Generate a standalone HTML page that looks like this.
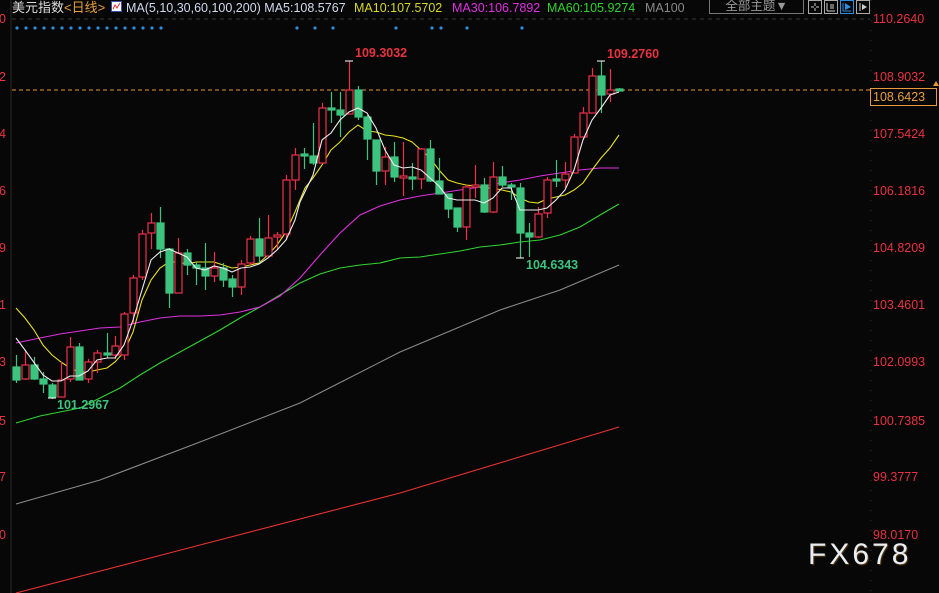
<!DOCTYPE html>
<html><head><meta charset="utf-8"><style>
body{margin:0;background:#070707;width:939px;height:593px;overflow:hidden;position:relative;font-family:"Liberation Sans","Noto Sans CJK SC",sans-serif}
.h{position:absolute;top:1px;font-size:12.5px;white-space:nowrap;line-height:14px}
.ax{position:absolute;left:873px;font-size:12.5px;color:#e8333f}
.lx{position:absolute;left:-1px;font-size:12.5px;color:#e8333f}
</style></head><body>
<svg width="939" height="593" style="position:absolute;left:0;top:0">
<line x1="11" y1="0" x2="11" y2="593" stroke="#2a2a2a"/>
<line x1="871" y1="0" x2="871" y2="593" stroke="#333" stroke-dasharray="1,9"/>
<line x1="12" y1="19" x2="870" y2="19" stroke="#3a3a3a" stroke-dasharray="4,4"/>
<line x1="12" y1="90" x2="870" y2="90" stroke="#e89a3a" stroke-dasharray="4,3"/>
<g fill="#2b8fdc">
<circle cx="17" cy="28" r="1.6"/><circle cx="26" cy="28" r="1.6"/><circle cx="35" cy="28" r="1.6"/><circle cx="44" cy="28" r="1.6"/><circle cx="53" cy="28" r="1.6"/><circle cx="62" cy="28" r="1.6"/><circle cx="71" cy="28" r="1.6"/><circle cx="80" cy="28" r="1.6"/><circle cx="89" cy="28" r="1.6"/><circle cx="98" cy="28" r="1.6"/><circle cx="107" cy="28" r="1.6"/><circle cx="116" cy="28" r="1.6"/><circle cx="125" cy="28" r="1.6"/><circle cx="134" cy="28" r="1.6"/><circle cx="143" cy="28" r="1.6"/><circle cx="152" cy="28" r="1.6"/><circle cx="161" cy="28" r="1.6"/>
<circle cx="297" cy="28" r="1.6"/><circle cx="315" cy="28" r="1.6"/><circle cx="333" cy="28" r="1.6"/><circle cx="396" cy="28" r="1.6"/><circle cx="432" cy="28" r="1.6"/><circle cx="441" cy="28" r="1.6"/><circle cx="467" cy="28" r="1.6"/><circle cx="522" cy="28" r="1.6"/>
</g>
<g fill="none" stroke-width="1.1">
<polyline stroke="#e8332f" points="16,593 200,545 400,493 619,427"/>
<polyline stroke="#8a8a8a" points="16,504 100,480 200,442 300,403 400,352 500,310 560,290 619,265"/>
<polyline stroke="#2fd42f" points="16,423 40,416 60,412 80,408 100,398 120,388 140,375 160,363 180,352 200,341 220,330 240,318 260,307 280,295 300,283 320,274 340,268 360,265 380,263 400,258 420,257 440,254 460,251 480,247 500,245 520,242 540,240 560,235 580,227 600,215 619,204"/>
<polyline stroke="#e030e0" points="16,343 40,338 60,334 80,331 100,328 120,327 140,322 160,318 180,316 200,316 220,315 240,312 260,307 280,296 300,278 320,255 340,233 360,215 380,206 400,200 420,196 440,193 460,190 480,187 500,183 520,180 540,176 560,173 580,170 600,168 619,168"/>
<polyline stroke="#e8e020" points="16,308 25,318 34,330 43,345 52,355 61,362 70,368 79,372 88,372 97,370 107,368 115,362 124,352 133,332 142,300 151,280 160,268 169,262 178,262 187,264 196,262 205,262 214,262 223,265 232,268 241,267 250,265 259,263 268,255 277,245 286,232 295,212 305,188 313,178 322,165 331,150 340,142 349,132 358,125 367,131 376,132 385,135 394,136 403,138 412,142 421,150 430,158 439,170 448,180 457,183 466,185 475,186 484,188 493,188 502,190 511,192 520,198 529,202 538,203 547,199 556,197 565,195 574,190 583,183 592,170 601,158 610,148 619,135"/>
</g>
<g id="c" stroke-width="1.2"></g>
<polyline fill="none" stroke="#eeeeee" stroke-width="1.1" points="16,338 25,350 43,375 52,381 61,381 70,376 79,376 88,371 97,360 107,358 115,358 124,345 133,320 142,290 151,260 160,252 169,249 178,253 187,257 196,268 205,270 214,266 223,268 232,272 241,268 250,267 259,264 268,258 277,250 286,240 295,220 300,202 313,175 322,140 331,133 340,120 349,112 358,108 367,113 376,128 385,150 394,165 403,168 412,167 421,170 430,178 439,186 448,198 457,200 466,200 475,200 484,203 493,198 502,188 511,188 520,210 529,210 538,210 547,208 556,200 565,190 574,170 583,140 592,120 601,108 610,95 619,92"/>
<g stroke="#fff" stroke-width="1"><line x1="345" y1="61" x2="353" y2="61"/><line x1="597" y1="61" x2="605" y2="61"/><line x1="516" y1="258" x2="524" y2="258"/><line x1="48" y1="398" x2="56" y2="398"/></g>
<polygon points="933,86 939,86 936,81" fill="#e89a3a"/>
<rect x="111.5" y="1.5" width="10" height="10" fill="#fff" stroke="#3355aa"/>
<polyline points="113,9 115,5 117,8 120,3" fill="none" stroke="#e03030" stroke-width="1"/>
<rect x="808.5" y="0.5" width="13" height="13" fill="none" stroke="#aaa"/>
<g stroke="#ccc"><line x1="815" y1="3" x2="815" y2="6"/><line x1="815" y1="8" x2="815" y2="11"/><line x1="811" y1="7" x2="814" y2="7"/><line x1="816" y1="7" x2="819" y2="7"/></g>
<rect x="824.5" y="0.5" width="13" height="13" fill="none" stroke="#aaa"/>
<g stroke="#ccc"><line x1="827" y1="3" x2="827" y2="11"/><line x1="827" y1="11" x2="835" y2="11"/><line x1="831" y1="4" x2="831" y2="9"/><line x1="833" y1="4" x2="833" y2="9"/></g>
<rect x="840.5" y="0.5" width="13" height="13" fill="none" stroke="#2b8fdc"/>
<g stroke="#2b8fdc"><line x1="843" y1="3" x2="843" y2="11"/><line x1="843" y1="11" x2="851" y2="11"/></g><polygon points="845,3 851,7 845,10" fill="#2b8fdc"/>
<rect x="856.5" y="0.5" width="13" height="13" fill="none" stroke="#aaa"/>
<line x1="860" y1="3" x2="860" y2="11" stroke="#ccc"/><polygon points="862,4 867,7 862,10" fill="#ccc"/>
</svg>
<div class="h" style="left:12px;color:#ddd;font-size:13px">美元指数<span style="color:#e8a040">&lt;日线&gt;</span></div>
<div class="h" style="left:126px;color:#cfd8ee">MA(5,10,30,60,100,200) MA5:108.5767</div>
<div class="h" style="left:354px;color:#d8d820">MA10:107.5702</div>
<div class="h" style="left:452px;color:#e030e0">MA30:106.7892</div>
<div class="h" style="left:547px;color:#2fd42f">MA60:105.9274</div>
<div class="h" style="left:645px;color:#888">MA100</div>
<div style="position:absolute;left:709px;top:0;width:93px;height:13px;border:1px solid #777;border-top:none;color:#999;font-size:12.5px;text-align:center;line-height:13px">全部主题▼</div>
<div class="ax" style="top:12px">110.2640</div><div class="ax" style="top:70px">108.9032</div>
<div style="position:absolute;left:870px;top:88px;width:63px;height:16px;border:1px solid #e89a3a;color:#e8a040;font-size:12.5px;line-height:16px;padding-left:2px">108.6423</div>
<div class="ax" style="top:127px">107.5424</div><div class="ax" style="top:184px">106.1816</div><div class="ax" style="top:241px">104.8209</div><div class="ax" style="top:298px">103.4601</div><div class="ax" style="top:355px">102.0993</div><div class="ax" style="top:414px">100.7385</div><div class="ax" style="top:470px">99.3777</div><div class="ax" style="top:528px">98.0170</div>
<div class="lx" style="top:12px">0</div><div class="lx" style="top:70px">2</div><div class="lx" style="top:127px">4</div><div class="lx" style="top:184px">6</div><div class="lx" style="top:241px">9</div><div class="lx" style="top:298px">1</div><div class="lx" style="top:355px">3</div><div class="lx" style="top:414px">5</div><div class="lx" style="top:470px">7</div><div class="lx" style="top:528px">0</div>
<div style="position:absolute;left:355px;top:46px;color:#e8333f;font-size:12.5px;font-weight:bold">109.3032</div>
<div style="position:absolute;left:607px;top:47px;color:#e8333f;font-size:12.5px;font-weight:bold">109.2760</div>
<div style="position:absolute;left:526px;top:258px;color:#3cc47f;font-size:12.5px;font-weight:bold">104.6343</div>
<div style="position:absolute;left:57px;top:398px;color:#3cc47f;font-size:12.5px;font-weight:bold">101.2967</div>
<div style="position:absolute;left:808px;top:538px;color:#e8eef5;font-size:30px;letter-spacing:3px;text-shadow:1px 1px 1px #5a3a10">FX678</div>
<script>
var d=[[16,367,380,355,383,0],[25,365,379,350,380,1],[34,365,379,357,380,0],[43,379,384,372,393,0],[52,385,397,383,399,0],[61,380,397,362,397,1],[70,347,379,337,382,1],[79,347,380,343,380,0],[88,362,379,359,383,1],[97,353,362,350,373,1],[107,353,355,333,358,0],[115,346,355,336,359,1],[124,314,355,312,360,1],[133,278,313,275,323,1],[142,234,277,230,280,1],[151,223,233,213,249,1],[160,223,249,207,258,0],[169,249,293,248,308,0],[178,253,293,238,293,1],[187,253,265,249,275,0],[196,265,268,262,285,0],[205,268,276,243,290,0],[214,268,276,252,282,1],[223,268,280,263,287,0],[232,279,287,275,297,0],[241,264,287,260,295,1],[250,239,263,236,265,1],[259,239,256,218,263,0],[268,238,256,215,258,1],[277,235,237,232,250,1],[286,180,234,175,240,1],[295,155,180,148,190,1],[304,154,156,148,169,0],[313,156,163,123,165,0],[322,108,163,103,163,1],[331,108,110,92,123,0],[340,110,115,92,137,0],[349,90,114,61,114,1],[358,90,117,86,120,0],[367,117,139,115,160,0],[376,140,171,140,185,0],[385,157,171,147,185,1],[394,157,177,142,182,0],[403,176,178,142,196,1],[412,177,179,163,190,0],[421,149,179,148,189,1],[430,149,181,140,182,0],[439,181,194,158,194,0],[448,194,209,194,218,0],[457,208,227,208,232,0],[466,187,227,185,240,1],[475,185,187,165,198,1],[484,185,212,178,213,0],[493,177,212,162,213,1],[502,177,185,166,187,0],[511,185,187,183,200,0],[520,188,233,183,258,0],[529,233,237,223,257,0],[538,214,237,207,238,1],[547,180,213,177,218,1],[556,179,181,160,187,0],[565,174,180,162,188,1],[574,137,173,134,173,1],[583,113,137,107,137,1],[592,76,113,68,113,1],[601,76,95,61,113,0],[610,90,94,69,102,1],[619,89,91,88,91,0]];
var s='';d.forEach(function(c){var col=c[5]?'#f0304a':'#3cc47f';s+='<line x1="'+c[0]+'.5" y1="'+c[3]+'" x2="'+c[0]+'.5" y2="'+c[4]+'" stroke="'+col+'"/>';s+='<rect x="'+(c[0]-3)+'" y="'+c[1]+'" width="7" height="'+Math.max(c[2]-c[1],1.5)+'" fill="'+(c[5]?'#070707':col)+'" stroke="'+col+'"/>';});
document.getElementById('c').innerHTML=s;
</script>
</body></html>
